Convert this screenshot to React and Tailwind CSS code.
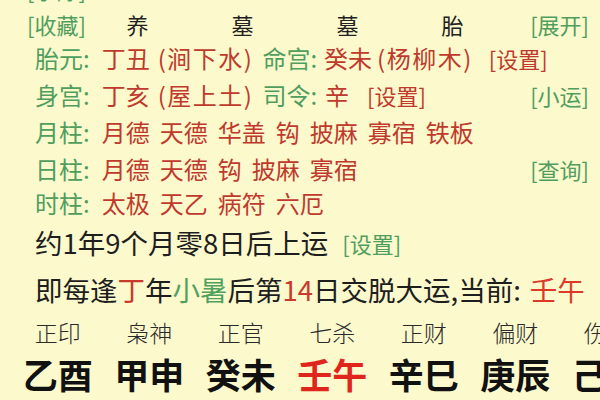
import React from "react";

const G = "text-[#4f9e5e]";
const R = "text-[#bf3a2c]";

function Row({ h, className = "", children }) {
  return (
    <div className={`flex items-center shrink-0 whitespace-nowrap ${className}`} style={{ height: h }}>
      {children}
    </div>
  );
}

export default function App() {
  const labels = ["正印", "枭神", "正官", "七杀", "正财", "偏财", "伤官"];
  const pillars = ["乙酉", "甲申", "癸未", "壬午", "辛巳", "庚辰", "己卯"];
  return (
    <div
      className="w-[600px] h-[400px] overflow-hidden bg-[#fcf9cd] flex flex-col leading-none"
      style={{ fontFamily: '"Noto Sans CJK SC", "Noto Sans", sans-serif' }}
    >
      <div className="mt-[-28px]" />
      <Row h={34} className="pl-[27px] text-[22px]">
        <span className={G}>[字除]</span>
      </Row>
      <Row h={36} className="pl-[27px] pr-[11px] text-[22px]">
        <span className={`${G} w-[58px]`}>[收藏]</span>
        {["养", "墓", "墓", "胎"].map((c, i) => (
          <span key={i} className="w-[105px] text-center text-[#222]">{c}</span>
        ))}
        <span className={`${G} ml-auto`}>[展开]</span>
      </Row>
      <Row h={32} className="pl-[35px] text-[24px]">
        <span className={G}>胎元:</span>
        <span className={`${R} ml-[12px]`}>丁丑</span>
        <span className={`${R} ml-[8px] tracking-[1.5px]`}>(涧下水)</span>
        <span className={`${G} ml-[9px]`}>命宫:</span>
        <span className={`${R} ml-[7px]`}>癸未</span>
        <span className={`${R} ml-[5px] tracking-[1.5px]`}>(杨柳木)</span>
        <span className={`${R} ml-[16px] text-[22px]`}>[设置]</span>
      </Row>
      <Row h={42} className="pl-[35px] pr-[11px] text-[24px]">
        <span className={G}>身宫:</span>
        <span className={`${R} ml-[12px]`}>丁亥</span>
        <span className={`${R} ml-[8px] tracking-[1.5px]`}>(屋上土)</span>
        <span className={`${G} ml-[9px]`}>司令:</span>
        <span className={`${R} ml-[8px]`}>辛</span>
        <span className={`${R} ml-[18px] text-[22px]`}>[设置]</span>
        <span className={`${G} ml-auto text-[22px]`}>[小运]</span>
      </Row>
      <Row h={32} className="pl-[35px] text-[24px] gap-[10px]">
        <span className={`${G} mr-[2px]`}>月柱:</span>
        {["月德", "天德", "华盖", "钩", "披麻", "寡宿", "铁板"].map((w, i) => (
          <span key={i} className={R}>{w}</span>
        ))}
      </Row>
      <Row h={42} className="pl-[35px] pr-[11px] text-[24px] gap-[10px]">
        <span className={`${G} mr-[2px]`}>日柱:</span>
        {["月德", "天德", "钩", "披麻", "寡宿"].map((w, i) => (
          <span key={i} className={R}>{w}</span>
        ))}
        <span className={`${G} ml-auto text-[22px]`}>[查询]</span>
      </Row>
      <Row h={26} className="pl-[35px] text-[24px] gap-[10px]">
        <span className={`${G} mr-[2px]`}>时柱:</span>
        {["太极", "天乙", "病符", "六厄"].map((w, i) => (
          <span key={i} className={R}>{w}</span>
        ))}
      </Row>
      <Row h={54} className="pl-[35px] text-[27.5px] text-[#1e1e1e]">
        <span>约1年9个月零8日后上运</span>
        <span className={`${G} ml-[14px] text-[22px]`}>[设置]</span>
      </Row>
      <Row h={40} className="pl-[35px] text-[27.5px] text-[#1e1e1e]">
        <span>即每逢</span>
        <span className="text-[#c93a2a]">丁</span>
        <span>年</span>
        <span className="text-[#4fa25e]">小暑</span>
        <span>后第</span>
        <span className="text-[#c93a2a]">14</span>
        <span>日交脱大运,当前: </span>
        <span className="text-[#dc3a28] ml-[9px]">壬午</span>
      </Row>
      <Row h={44} className="pl-[12px] text-[23px] text-[#2a2a2a] font-light">
        {labels.map((l, i) => (
          <span key={i} className="w-[91.5px] shrink-0 text-center">{l}</span>
        ))}
      </Row>
      <Row h={38} className="pl-[12px] text-[35px] font-bold text-[#111]">
        {pillars.map((p, i) => (
          <span key={i} className={`w-[91.5px] shrink-0 text-center ${i === 3 ? "text-[#e0261c]" : ""}`}>
            {p}
          </span>
        ))}
      </Row>
    </div>
  );
}
